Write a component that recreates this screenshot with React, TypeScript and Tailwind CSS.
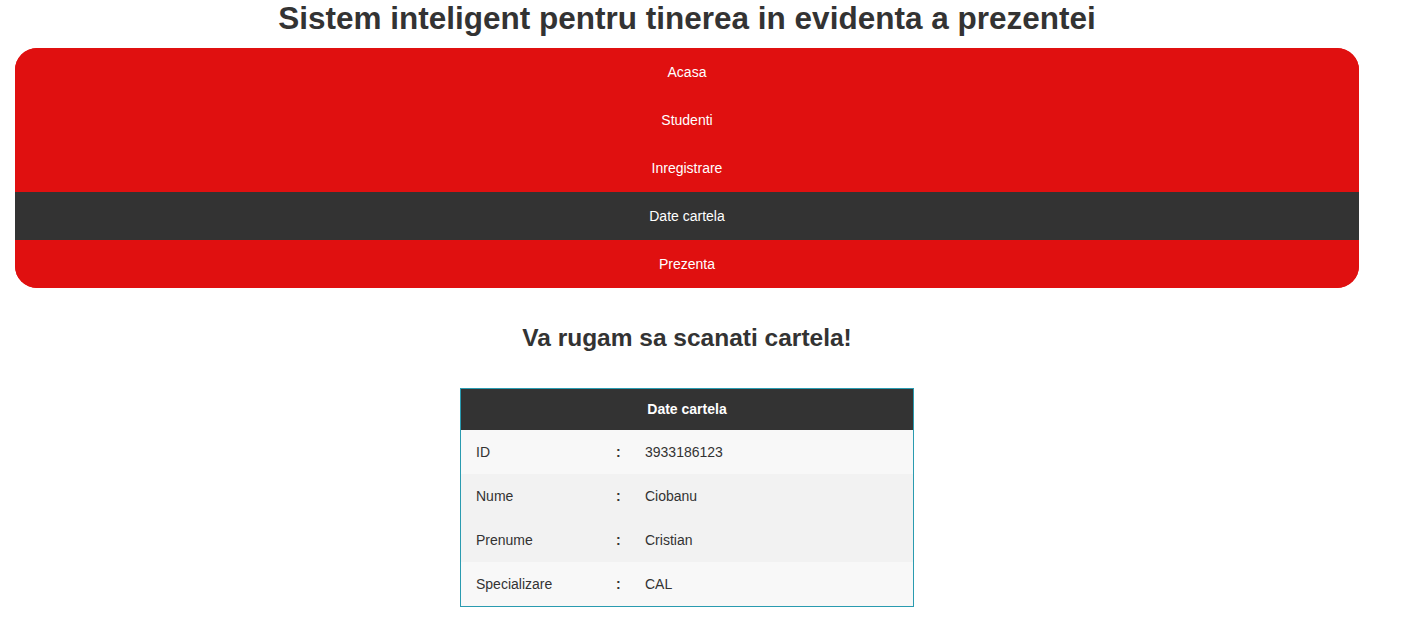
const navItems = ["Acasa", "Studenti", "Inregistrare", "Date cartela", "Prezenta"];

const rows = [
  { label: "ID", value: "3933186123", bg: "bg-[#f8f8f8]" },
  { label: "Nume", value: "Ciobanu", bg: "bg-[#f2f2f2]" },
  { label: "Prenume", value: "Cristian", bg: "bg-[#f2f2f2]" },
  { label: "Specializare", value: "CAL", bg: "bg-[#f8f8f8]" },
];

const App = () => {
  return (
    <div className="w-[1374px] px-[15px] bg-white text-[#333] font-['Liberation_Sans',Arial,sans-serif] min-h-[643px]">
      <h1 className="text-center text-[31.5px] font-bold leading-[37px] mb-[11px]">
        Sistem inteligent pentru tinerea in evidenta a prezentei
      </h1>
      <nav className="rounded-[22px] overflow-hidden bg-[#e01010]">
        {navItems.map((item) => (
          <div
            key={item}
            className={`h-12 flex items-center justify-center text-sm text-white ${
              item === "Date cartela" ? "bg-[#333333]" : "bg-[#e01010]"
            }`}
          >
            {item}
          </div>
        ))}
      </nav>
      <h2 className="text-center text-[24.5px] font-bold leading-[28px] mt-9 mb-9">
        Va rugam sa scanati cartela!
      </h2>
      <div className="mx-auto w-[454px] border border-[#2a9bb0]">
        <div className="h-[41px] pb-px bg-[#333333] flex items-center justify-center text-sm font-bold text-white">
          Date cartela
        </div>
        {rows.map((row) => (
          <div key={row.label} className={`h-11 flex items-center text-sm ${row.bg}`}>
            <div className="w-[155px] pl-[15px]">{row.label}</div>
            <div className="w-[29px] font-bold">:</div>
            <div>{row.value}</div>
          </div>
        ))}
      </div>
    </div>
  );
};

export default App;
